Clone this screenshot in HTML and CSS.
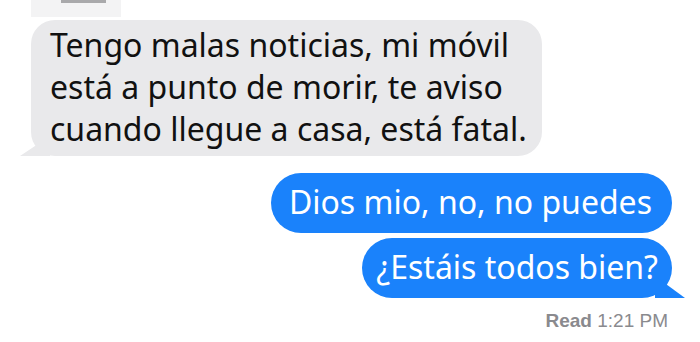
FILE: index.html
```html
<!DOCTYPE html>
<html lang="es">
<head>
<meta charset="utf-8">
<link rel="stylesheet" href="styles.css">
</head>
<body>
<div class="thread">
  <div class="prev"><div class="prev-bar"></div></div>
  <div class="row in">
    <div class="bubble gray">Tengo malas noticias, mi móvil<br>está a punto de morir, te aviso<br>cuando llegue a casa, está fatal.</div>
  </div>
  <div class="row out first">
    <div class="bubble blue">Dios mio, no, no puedes</div>
  </div>
  <div class="row out">
    <div class="bubble blue tail">¿Estáis todos bien?</div>
  </div>
  <div class="status"><b>Read</b> 1:21 PM</div>
</div>
</body>
</html>
```
FILE: styles.css
```css
* { box-sizing: border-box; }
html, body { margin: 0; padding: 0; background: #fff; }
body { width: 700px; height: 342px; overflow: hidden; font-family: "Noto Sans", sans-serif; }
.thread { display: flex; flex-direction: column; position: relative; padding: 0 28px 0 31px; }
.prev { width: 90px; height: 17px; background: #f3f3f4; margin-bottom: 3px; position: relative; }
.prev-bar { position: absolute; left: 30px; top: 0; width: 45px; height: 3px; background: #a9a9ab; }
.row { display: flex; }
.row.out { justify-content: flex-end; }
.bubble { position: relative; font-size: 32px; line-height: 42px; white-space: nowrap; }
.gray { background: #e9e9eb; color: #111; width: 511px; padding: 4px 19px 6px 19px; border-radius: 24px; }
.gray::before { content: ""; position: absolute; left: -11px; bottom: 0; width: 30px; height: 20px; background: #e9e9eb; clip-path: polygon(0 100%, 100% 0, 100% 100%); }
.blue { background: #1a82fb; color: #fff; padding: 8px 20px 10px 18px; border-radius: 30px; }
.blue.tail { padding-left: 14px; padding-right: 14px; }
.first { margin-top: 17px; margin-bottom: 5px; }
.tail::after { content: ""; position: absolute; right: -13px; bottom: 0; width: 30px; height: 22px; background: #1a82fb; clip-path: polygon(0 0, 100% 100%, 0 100%); }
.status { align-self: flex-end; margin-top: 12px; margin-right: 4px; font-family: "Liberation Sans", sans-serif; font-size: 19px; color: #8a8a8e; }
.status b { font-weight: bold; }
```
